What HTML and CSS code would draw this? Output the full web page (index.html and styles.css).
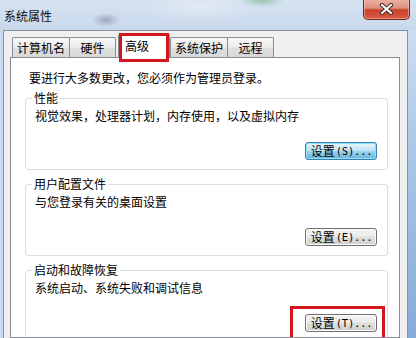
FILE: index.html
```html
<!DOCTYPE html>
<html lang="zh-CN">
<head>
<meta charset="utf-8">
<title>系统属性</title>
<link rel="stylesheet" href="styles.css">
</head>
<body>
<div class="window">
  <div class="titlebar">
    <span class="title">系统属性</span>
    <div class="close">
      <svg width="15" height="12" viewBox="0 0 15 12">
        <path d="M3 2 L12 10 M12 2 L3 10" stroke="#4a2a2a" stroke-width="4.2" stroke-linecap="round" fill="none"/>
        <path d="M3 2 L12 10 M12 2 L3 10" stroke="#ffffff" stroke-width="2.2" stroke-linecap="round" fill="none"/>
      </svg>
    </div>
  </div>
  <div class="client">
    <div class="tabs">
      <div class="tab">计算机名</div>
      <div class="tab">硬件</div>
      <div class="tab active">高级</div>
      <div class="tab">系统保护</div>
      <div class="tab">远程</div>
    </div>
    <div class="panel">
      <p class="note">要进行大多数更改，您必须作为管理员登录。</p>
      <section class="group">
        <span class="legend">性能</span>
        <p class="desc">视觉效果，处理器计划，内存使用，以及虚拟内存</p>
        <div class="actions"><button class="btn default">设置<span class="key">(S)...</span></button></div>
      </section>
      <section class="group">
        <span class="legend">用户配置文件</span>
        <p class="desc">与您登录有关的桌面设置</p>
        <div class="actions"><button class="btn">设置<span class="key">(E)...</span></button></div>
      </section>
      <section class="group">
        <span class="legend">启动和故障恢复</span>
        <p class="desc">系统启动、系统失败和调试信息</p>
        <div class="actions"><button class="btn marked">设置<span class="key">(T)...</span></button></div>
      </section>
    </div>
  </div>
</div>
</body>
</html>
```
FILE: styles.css
```css
* { box-sizing: border-box; }
html, body { margin: 0; padding: 0; }
body {
  width: 416px;
  height: 338px;
  overflow: hidden;
  font-family: "Noto Sans CJK SC", "Noto Sans", sans-serif;
  font-size: 12px;
  color: #000;
}
.window {
  height: 338px;
  display: flex;
  flex-direction: column;
  background:
    linear-gradient(to right, #c8dbf0 0, #c8dbf0 208px, transparent 208px),
    linear-gradient(to bottom, #d4e3f3, #aac7e7 45%, #86acd8);
}
.titlebar {
  height: 30px;
  flex: none;
  display: flex;
  justify-content: space-between;
  align-items: flex-start;
  padding: 0 6px 0 4px;
  background:
    radial-gradient(ellipse 14px 7px at 106px 20px, rgba(95,105,125,.45), transparent),
    radial-gradient(ellipse 22px 6px at 262px 1px, rgba(110,170,120,.55), transparent),
    radial-gradient(ellipse 60px 14px at 200px 8px, rgba(255,255,255,.35), transparent),
    linear-gradient(#d5e2f1, #c8d8eb);
}
.title {
  margin-top: 8px;
  line-height: 16px;
  color: #111;
}
.close {
  width: 47px;
  height: 21px;
  margin-top: -1px;
  border: 1px solid #6b2a22;
  border-top: none;
  border-radius: 0 0 5px 5px;
  background: linear-gradient(#eab3a6, #df8f7c 45%, #c9432e 55%, #d65a40);
  box-shadow: inset 0 0 0 1px rgba(255,220,210,.45);
  display: flex;
  align-items: center;
  justify-content: center;
}
.client {
  flex: 1;
  min-height: 0;
  margin: 0 8px 0 3px;
  background: #f0f0f0;
  border: 1px solid #8593a6;
  border-bottom: none;
  padding: 3px 7px 0 6px;
  display: flex;
  flex-direction: column;
}
.tabs {
  height: 23px;
  flex: none;
  display: flex;
  align-items: flex-end;
  padding-left: 2px;
}
.tab {
  height: 20px;
  min-width: 47px;
  padding: 0 4px;
  margin-left: -1px;
  line-height: 19px;
  text-align: center;
  border: 1px solid #898c95;
  border-bottom: none;
  border-radius: 2px 2px 0 0;
  background: linear-gradient(#f8f8f8, #ededed 45%, #dfdfdf 55%, #d8d8d8);
}
.tab:first-child { margin-left: 0; }
.tab.active {
  position: relative;
  z-index: 1;
  width: 52px;
  height: 24px;
  margin: 0 0 -1px 2px;
  line-height: 21px;
  text-align: left;
  padding-left: 6px;
  background: #fff;
}
.tab.active::after {
  content: "";
  position: absolute;
  left: 0;
  right: 0;
  top: -2px;
  bottom: -4px;
  border: 3px solid #d3161e;
}
.tab.active + .tab { margin-left: 0; }
.panel {
  flex: 1;
  min-height: 0;
  overflow: hidden;
  background: #fff;
  border: 1px solid #898c95;
  padding: 12px 11px 0 14px;
}
.note {
  margin: 0 0 12px 4px;
  line-height: 16px;
}
.group {
  position: relative;
  border: 1px solid #d5dfe5;
  border-radius: 3px;
  padding: 9px 10px 9px 9px;
  margin-bottom: 14px;
}
.legend {
  position: absolute;
  top: -8px;
  left: 6px;
  padding: 0 2px;
  line-height: 14px;
  background: #fff;
}
.desc {
  margin: 0;
  line-height: 16px;
}
.actions {
  display: flex;
  justify-content: flex-end;
  margin-top: 18px;
}
.btn {
  width: 72px;
  height: 18px;
  padding: 0 0 0 1px;
  font: inherit;
  font-size: 12px;
  line-height: 16px;
  color: #000;
  border: 1px solid #707070;
  border-radius: 3px;
  background: linear-gradient(#f3f3f3, #ebebeb 45%, #dddddd 55%, #cfcfcf);
  box-shadow: inset 0 0 0 1px #fcfcfc;
  display: flex;
  align-items: center;
  justify-content: center;
}
.btn.default {
  border-color: #3c7fb1;
  background: linear-gradient(#e5f4fc, #c4e5f6 45%, #98d1ef 55%, #68b3db);
  box-shadow: inset 0 0 0 1px #8fe0fb;
}
.key {
  font-family: "DejaVu Sans Mono", monospace;
  font-size: 10.5px;
  letter-spacing: -0.2px;
  margin-left: 1px;
}
.btn.marked { position: relative; }
.btn.marked::after {
  content: "";
  position: absolute;
  top: -9px;
  left: -16px;
  right: -9px;
  height: 60px;
  border: 3px solid #d3161e;
}
```
